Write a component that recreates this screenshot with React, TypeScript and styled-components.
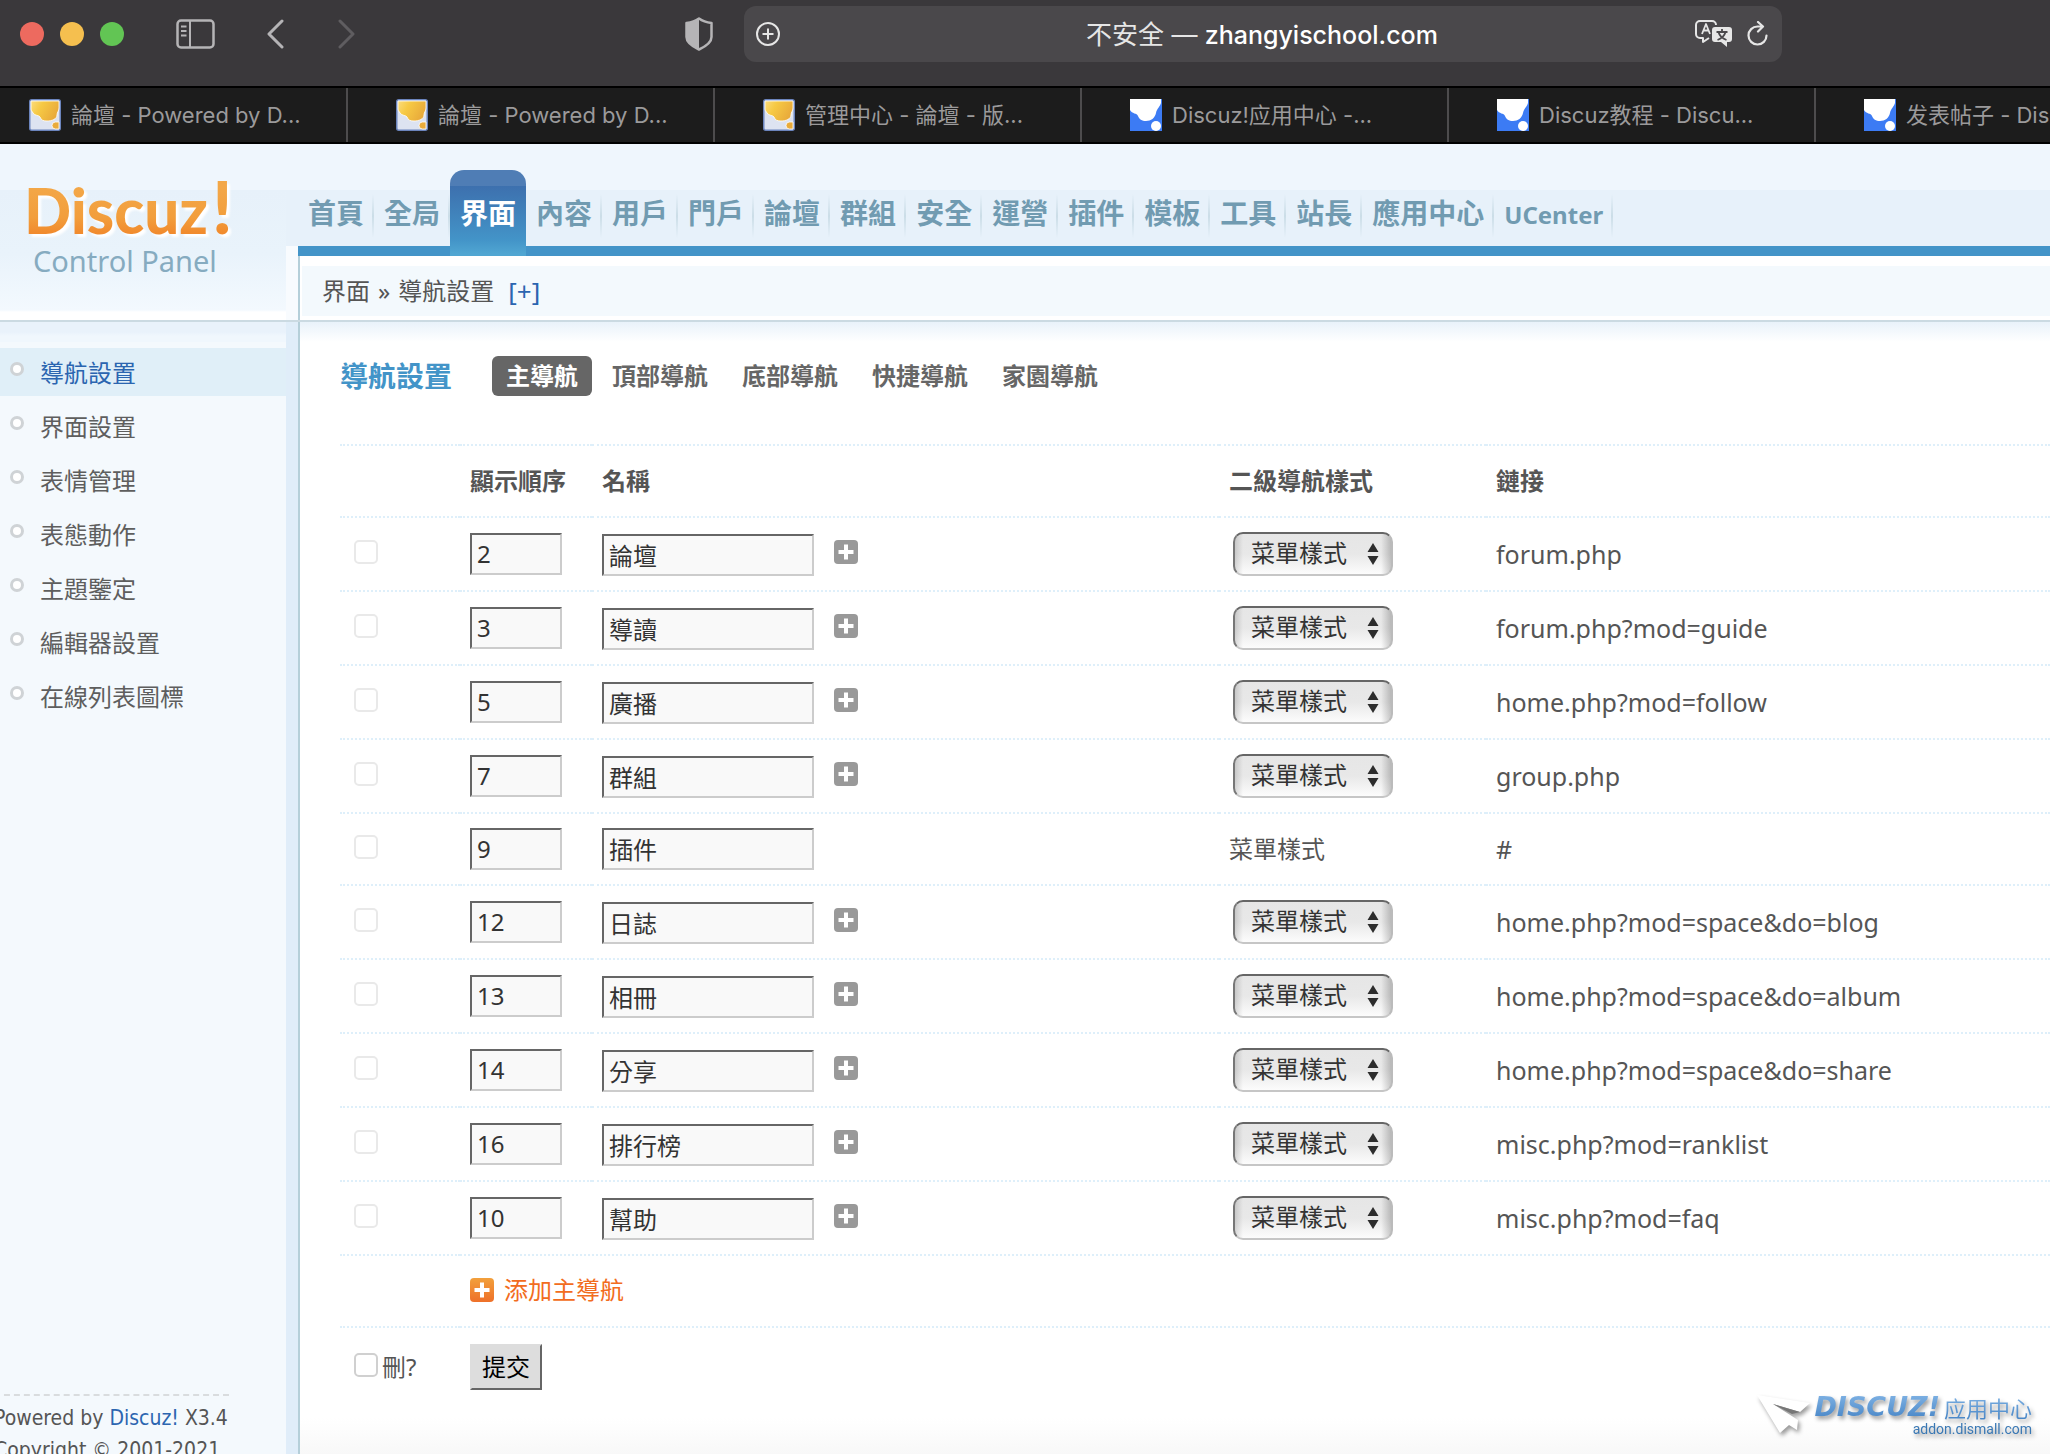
import React from "react";
import styled, { createGlobalStyle, css } from "styled-components";

const sans = `"Noto Sans", "Noto Sans CJK TC", sans-serif`;
const chromeSans = `Inter, "Noto Sans CJK SC", sans-serif`;
const textGrey = "#555";
const linkBlue = "#2b65b0";
const barBlue = "#4394c8";
const edge = "#b5cfd9";

const GlobalStyle = createGlobalStyle`
  * { box-sizing: border-box; }
  body { margin: 0; overflow: hidden; background: #fff; }
  button, input, select { font: inherit; margin: 0; }
  a { color: inherit; text-decoration: none; }
`;

const Shell = styled.div`
  display: flex;
  flex-direction: column;
  height: 100vh;
  overflow: hidden;
  font: 24px/32px ${sans};
  color: ${textGrey};
`;

/* Browser window */
const Toolbar = styled.header`
  display: flex;
  flex: none;
  align-items: flex-start;
  height: 88px;
  padding: 6px 268px 0 0;
  background: #3a383b;
  border-bottom: 2px solid #000;
`;

const ToolbarStart = styled.div`
  display: flex;
  flex: none;
  align-items: center;
  width: 744px;
  height: 56px;
  padding: 0 31px 0 20px;
`;

const Lights = styled.div`
  display: flex;
  gap: 16px;
  margin-right: 52px;
`;

const Light = styled.button<{ $color: string }>`
  width: 24px;
  height: 24px;
  padding: 0;
  border: 0;
  border-radius: 50%;
  background: ${(p) => p.$color};
`;

const IconButton = styled.button<{ $color?: string }>`
  display: flex;
  flex: none;
  padding: 0;
  border: 0;
  background: none;
  color: ${(p) => p.$color ?? "#b5b4b6"};
`;

const Arrows = styled.div`
  display: flex;
  gap: 54px;
  margin: 0 auto 0 52px;
`;

const AddressBar = styled.div`
  display: grid;
  grid-template-columns: 1fr auto 1fr;
  align-items: center;
  flex: 1;
  height: 56px;
  padding: 0 14px 0 12px;
  border-radius: 12px;
  background: #4a484b;
  color: #fff;
  font: 500 25px/32px ${chromeSans};
`;

const AddressText = styled.span`
  padding-top: 2px;
`;

const Insecure = styled.span`
  font-size: 26px;
  font-weight: 400;
  color: #e6e6e6;
`;

const AddressTools = styled.div`
  display: flex;
  justify-content: flex-end;
  align-items: center;
  gap: 14px;
`;

const TabStrip = styled.nav`
  display: flex;
  flex: none;
  height: 56px;
  margin-left: -19px;
  background: #1c1c1c;
  border-bottom: 2px solid #000;
`;

const BrowserTab = styled.a`
  display: flex;
  flex: none;
  align-items: center;
  gap: 10px;
  width: 367px;
  padding-left: 48px;
  border-right: 2px solid #4d4c4d;
  color: #9b9a9b;
  font: 22px/32px ${chromeSans};
  white-space: nowrap;
`;

/* Control panel header */
const PanelHeader = styled.header`
  display: flex;
  flex: none;
  height: 178px;
  border-bottom: 2px solid #cbdae2;
`;

const Logo = styled.a`
  display: block;
  width: 286px;
  padding: 28px 0 0 24px;
  background: linear-gradient(#eff6fd 46px, #e7f1fa 46px, #e9f3fb 110px, #f3f9fe 166px, #fff 168px);
`;

const LogoName = styled.span`
  display: block;
  font: 900 62px/76px Lato, sans-serif;
  background: linear-gradient(#f3a748 20%, #f29e3c 60%, #f18b2e 80%);
  background-clip: text;
  color: transparent;
  filter: drop-shadow(3px 3px 1px #fff);
`;

const LogoBang = styled.span`
  margin-left: 4px;
  font-size: 72px;
  line-height: 0;
`;

const LogoSub = styled.span`
  display: block;
  padding-left: 9px;
  font-size: 29px;
  line-height: 26px;
  color: #86abc0;
`;

const HeaderGutter = styled.div`
  width: 12px;
  background: linear-gradient(#eff6fd 46px, #e7f1fa 46px, #e7f1fa 102px, #f8fbfe 102px);
`;

const HeaderMain = styled.div`
  display: flex;
  flex-direction: column;
  flex: 1;
`;

const TopNav = styled.nav`
  display: flex;
  height: 112px;
  padding-top: 26px;
  background: linear-gradient(#eff6fd 46px, #e7f1fa 46px, #e7f1fa 102px, ${barBlue} 102px);
`;

const TopLink = styled.a<{ $active?: boolean }>`
  padding: 0 10px;
  font-size: 28px;
  font-weight: 700;
  line-height: 86px;
  color: #719bb1;
  background: linear-gradient(transparent, #cbdde7 50%, transparent) right 24px / 2px 44px no-repeat;
  ${(p) =>
    p.$active &&
    css`
      color: #fff;
      border-radius: 14px 14px 0 0;
      background: linear-gradient(#4f7db5 16px, #3d70ae 16px, ${barBlue} 70px, #50a6d2 84px);
    `}
`;

const LatinLabel = styled.span`
  font-size: 24px;
`;

const CrumbFrame = styled.div`
  flex: 1;
  padding: 10px 0 4px 2px;
  border-left: 2px solid ${edge};
  background: #fff;
`;

const Crumb = styled.div`
  display: flex;
  align-items: center;
  gap: 8px;
  height: 50px;
  padding-left: 20px;
  background: #f3f9fd;
`;

const CrumbAdd = styled.a`
  padding-left: 6px;
  font-size: 26px;
  color: ${linkBlue};
`;

/* Body */
const Body = styled.div`
  display: flex;
  flex: 1;
  min-height: 0;
`;

const Sidebar = styled.aside`
  display: flex;
  flex-direction: column;
  width: 300px;
  border-right: 2px solid ${edge};
  background: linear-gradient(to right, transparent 286px, #e0edf9 286px),
    linear-gradient(#e9f2fb 10px, #f0f7fd 14px, #f0f7fd 20px, #f4f9fd 20px);
`;

const SideList = styled.ul`
  display: flex;
  flex-direction: column;
  gap: 6px;
  margin: 0;
  padding: 26px 12px 0 0;
  list-style: none;
`;

const SideLink = styled.a<{ $active?: boolean }>`
  display: flex;
  align-items: center;
  gap: 16px;
  height: 48px;
  padding: 2px 0 0 10px;
  color: ${(p) => (p.$active ? linkBlue : "#5e5e5e")};
  background: ${(p) => (p.$active ? "#e0eff8" : "transparent")};
`;

const Bullet = styled.span`
  width: 14px;
  height: 14px;
  margin-bottom: 8px;
  border: 3px solid #cfd3d6;
  border-radius: 50%;
  background: #fff;
`;

const SideFooter = styled.footer`
  width: 235px;
  margin: auto 0 -12px -6px;
  padding-top: 6px;
  border-top: 2px dashed #d9dcde;
  font: 21px/32px "DejaVu Sans Condensed", "DejaVu Sans", sans-serif;
  font-stretch: condensed;
  white-space: nowrap;

  p { margin: 0; }
  a { color: ${linkBlue}; }
`;

const Content = styled.main`
  flex: 1;
  min-width: 0;
  padding: 34px 0 0 40px;
  background: linear-gradient(#e9f2fa, #fff 20px, #fff calc(100% - 36px), #f8f8f8);
`;

const TitleRow = styled.div`
  display: flex;
  align-items: center;
  gap: 40px;
  height: 40px;
  margin-bottom: 48px;
`;

const Title = styled.h1`
  margin: 0;
  font-size: 28px;
  line-height: 40px;
  color: ${barBlue};
`;

const SubTabs = styled.nav`
  display: flex;
  gap: 6px;
`;

const SubTab = styled.a<{ $active?: boolean }>`
  padding: 0 14px;
  border-radius: 6px;
  font-weight: 700;
  line-height: 40px;
  color: ${(p) => (p.$active ? "#fff" : "#666")};
  background: ${(p) => (p.$active ? "#666" : "transparent")};
`;

const Table = styled.table`
  width: 100%;
  table-layout: fixed;
  border-collapse: separate;
  border-spacing: 0;
`;

const Col = styled.col<{ $width?: number }>`
  width: ${(p) => (p.$width ? `${p.$width}px` : "auto")};
`;

const cell = css`
  padding: 14px 0 14px 10px;
  border-top: 2px dotted #deeffa;
  text-align: left;
  vertical-align: middle;
`;

const Th = styled.th`
  ${cell}
  height: 72px;
`;

const Td = styled.td`
  ${cell}
  height: 72px;
`;

const LinkTd = styled(Td)`
  font-size: 25px;
`;

const FootTd = styled(Td)`
  padding-top: 16px;
`;

const Check = styled.input<{ $strong?: boolean }>`
  appearance: none;
  display: block;
  width: 24px;
  height: 24px;
  margin: 0 0 4px 4px;
  border: 2px solid ${(p) => (p.$strong ? "#d0d0d0" : "#e9e9e9")};
  border-radius: 5px;
  background: #fff;
`;

const CheckLabel = styled.label`
  display: flex;
  align-items: center;
  gap: 4px;
`;

const Field = styled.input<{ $width: number }>`
  display: block;
  width: ${(p) => p.$width}px;
  height: 42px;
  padding: 0 5px 2px;
  border: 2px solid;
  border-color: #666 #ccc #ccc #666;
  background: #f9f9f9;
  color: #333;
`;

const NameLine = styled.div<{ $nested: boolean }>`
  display: flex;
  align-items: flex-start;
  gap: 20px;
  padding-top: ${(p) => (p.$nested ? 2 : 0)}px;
`;

const PlusButton = styled(IconButton)`
  padding-top: 6px;
`;

const SelectBox = styled.div`
  position: relative;
  width: 160px;
  height: 44px;
  margin-left: 4px;

  svg {
    position: absolute;
    right: 14px;
    top: 10px;
    pointer-events: none;
  }
`;

const Select = styled.select`
  appearance: none;
  display: block;
  width: 100%;
  height: 100%;
  padding: 0 0 2px 16px;
  border: 2px solid;
  border-color: #666 #bbb #c6c6c6 #777;
  border-radius: 10px;
  background: linear-gradient(to right, #0002, transparent 8px, transparent calc(100% - 10px), #0003),
    linear-gradient(#e6e6e6, #e8e8e8 50%, #fcfcfc);
  color: #333;
`;

const AddLink = styled.a`
  display: inline-flex;
  align-items: center;
  gap: 10px;
  color: #f26c20;
`;

const Submit = styled.button`
  display: block;
  width: 72px;
  height: 46px;
  padding: 0;
  border: 2px solid;
  border-color: #ddd #666 #666 #ddd;
  background: #ddd;
  color: #000;
`;

const Watermark = styled.a`
  position: fixed;
  right: 18px;
  bottom: 16px;
  display: flex;
  align-items: flex-start;
  gap: 3px;
  filter: drop-shadow(2px 3px 2px #0006);
`;

const MarkText = styled.span`
  display: flex;
  flex-direction: column;
  align-items: flex-end;
`;

const MarkTop = styled.span`
  display: flex;
  align-items: center;
  gap: 4px;
  font: 22px/26px "Noto Sans CJK SC", sans-serif;
  background: linear-gradient(#7fb2e4, #4785c6);
  background-clip: text;
  color: transparent;
`;

const MarkName = styled.em`
  font: italic 700 27px/26px "DejaVu Sans", sans-serif;
`;

const MarkUrl = styled.span`
  font: 14px/18px Roboto, sans-serif;
  color: #3a78b4;
`;

const SidebarIcon = () => (
  <svg width="39" height="30" viewBox="0 0 39 30" fill="none" stroke="currentColor" strokeWidth="2.5">
    <rect x="1.5" y="1.5" width="36" height="27" rx="3.5" />
    <path d="M14 1.5v27M5 7.500h5.500M5 12h5.500M5 16.500h5.500" strokeWidth="2" />
  </svg>
);

const Chevron = ({ right }: { right?: boolean }) => (
  <svg width="17" height="30" viewBox="0 0 17 30" fill="none" stroke="currentColor" strokeWidth="3" strokeLinecap="round" strokeLinejoin="round">
    <path d={right ? "M2 2l13 13L2 28" : "M15 2L2 15l13 13"} />
  </svg>
);

const Shield = () => (
  <svg width="28" height="34" viewBox="0 0 28 34">
    <path d="M14 1.500C10 4.500 6 5.500 1.500 6v14c0 5 6 9.500 12.500 12.500C20.500 29.500 26.500 25 26.500 20V6C22 5.500 18 4.500 14 1.500z" fill="none" stroke="currentColor" strokeWidth="2.5" strokeLinejoin="round" />
    <path d="M14 1.500C10 4.500 6 5.500 1.500 6v14c0 5 6 9.500 12.500 12.500z" fill="currentColor" />
  </svg>
);

const CirclePlus = () => (
  <svg width="24" height="24" viewBox="0 0 24 24" fill="none" stroke="currentColor" strokeWidth="2">
    <circle cx="12" cy="12" r="11" />
    <path d="M12 6.500v11M6.500 12h11" />
  </svg>
);

const Translate = () => (
  <svg width="38" height="28" viewBox="0 0 38 28" fill="none" stroke="currentColor" strokeWidth="2" strokeLinejoin="round">
    <path d="M14 18l-6 4v-4H5a4 4 0 0 1-4-4V5a4 4 0 0 1 4-4h12a4 4 0 0 1 4 4" />
    <path d="M7 14l4-10 4 10M8.500 10.500h5" strokeWidth="1.8" />
    <path d="M20 7h14a3 3 0 0 1 3 3v9a3 3 0 0 1-3 3h-2v5l-6-5h-6a3 3 0 0 1-3-3v-9a3 3 0 0 1 3-3z" fill="currentColor" stroke="none" />
    <path d="M27 9v3M21.500 12h11M23.500 12c1 4 4 6.500 8 8M30.500 12c-1 4-4 6.500-8 8" stroke="#4a484b" strokeWidth="1.8" />
  </svg>
);

const Reload = () => (
  <svg width="21" height="26" viewBox="0 0 21 26" fill="none" stroke="currentColor" strokeWidth="2.2" strokeLinecap="round" strokeLinejoin="round">
    <path d="M19.500 14.500a9 9 0 1 1-9-9h5M11 1l5 4.500-5 5" />
  </svg>
);

const ForumIcon = () => (
  <svg width="32" height="32" viewBox="0 0 32 32">
    <defs>
      <linearGradient id="gold" x1="0" y1="0" x2="1" y2="0.4">
        <stop offset="0" stopColor="#fbdc7c" />
        <stop offset="0.4" stopColor="#f6c944" />
        <stop offset="1" stopColor="#e9ab3b" />
      </linearGradient>
    </defs>
    <rect x="0.750" y="0.750" width="30.500" height="30.500" rx="2" fill="#dde3f1" stroke="#6b84bd" strokeWidth="1.5" />
    <path d="M2 2h28v7c0 3-2 4-2 7 0 4-5 6-10 6-4 0-6-1-7-4-1-2-5-1-7-4-1-2-2-2-2-4z" fill="url(#gold)" stroke="#fff" strokeWidth="0.8" />
    <path d="M30 23v7h-3.500a3.500 3.500 0 0 1 0-7z" fill="#e9ab3b" stroke="#fff" strokeWidth="0.8" />
  </svg>
);

const AddonIcon = () => (
  <svg width="32" height="32" viewBox="0 0 32 32">
    <path d="M0 0h32v32H0z" fill="#3c7bf4" />
    <path d="M0 0h31v4c-1 4-4 5-5 10-1 5-5 8-10 8-4 0-7-2-8-5-1-3-6-2-8-6z" fill="#fff" />
    <circle cx="26" cy="27" r="5" fill="#fff" />
  </svg>
);

const PlusTile = ({ accent }: { accent?: boolean }) => (
  <svg width="24" height="24" viewBox="0 0 24 24">
    <defs>
      <linearGradient id="accentTile" x1="0" y1="0" x2="0" y2="1">
        <stop offset="0" stopColor="#f2a03c" />
        <stop offset="1" stopColor="#ee7029" />
      </linearGradient>
    </defs>
    <rect width="24" height="24" rx="4" fill={accent ? "url(#accentTile)" : "#999"} />
    <path d="M12 4.500v15M4.500 12h15" stroke="#fff" strokeWidth="4" />
  </svg>
);

const SelectArrows = () => (
  <svg width="12" height="24" viewBox="0 0 12 24" fill="#2c2c2c">
    <path d="M6 1l5.500 9H.5zM6 23l5.500-9H.5z" />
  </svg>
);

const PaperPlane = () => (
  <svg width="54" height="40" viewBox="0 0 54 40" fill="#fff">
    <path d="M0 1l53 8-10 9-27-8 25 16-1 10-8-5-9 8z" />
    <path d="M16 10l27 8-8 2z" fill="#777" />
  </svg>
);

const browserTabs = [
  { icon: "forum", label: "論壇 - Powered by D..." },
  { icon: "forum", label: "論壇 - Powered by D..." },
  { icon: "forum", label: "管理中心 - 論壇 - 版..." },
  { icon: "addon", label: "Discuz!应用中心 -..." },
  { icon: "addon", label: "Discuz教程 - Discu..." },
  { icon: "addon", label: "发表帖子 - Discuz!" },
];

const topNav = ["首頁", "全局", "界面", "內容", "用戶", "門戶", "論壇", "群組", "安全", "運營", "插件", "模板", "工具", "站長", "應用中心"];
const sideNav = ["導航設置", "界面設置", "表情管理", "表態動作", "主題鑒定", "編輯器設置", "在線列表圖標"];
const subTabs = ["主導航", "頂部導航", "底部導航", "快捷導航", "家園導航"];

const rows = [
  { order: "2", name: "論壇", link: "forum.php" },
  { order: "3", name: "導讀", link: "forum.php?mod=guide" },
  { order: "5", name: "廣播", link: "home.php?mod=follow" },
  { order: "7", name: "群組", link: "group.php" },
  { order: "9", name: "插件", link: "#", fixed: true },
  { order: "12", name: "日誌", link: "home.php?mod=space&do=blog" },
  { order: "13", name: "相冊", link: "home.php?mod=space&do=album" },
  { order: "14", name: "分享", link: "home.php?mod=space&do=share" },
  { order: "16", name: "排行榜", link: "misc.php?mod=ranklist" },
  { order: "10", name: "幫助", link: "misc.php?mod=faq" },
];

export default function App() {
  return (
    <Shell>
      <GlobalStyle />
      <Toolbar>
        <ToolbarStart>
          <Lights>
            <Light $color="#ed6a5f" aria-label="Close" />
            <Light $color="#f5bf4f" aria-label="Minimize" />
            <Light $color="#62c554" aria-label="Zoom" />
          </Lights>
          <IconButton aria-label="Sidebar"><SidebarIcon /></IconButton>
          <Arrows>
            <IconButton aria-label="Back"><Chevron /></IconButton>
            <IconButton aria-label="Forward" $color="#5f5d60"><Chevron right /></IconButton>
          </Arrows>
          <IconButton aria-label="Privacy report"><Shield /></IconButton>
        </ToolbarStart>
        <AddressBar>
          <IconButton aria-label="Add" $color="#e6e6e6"><CirclePlus /></IconButton>
          <AddressText><Insecure>不安全 — </Insecure>zhangyischool.com</AddressText>
          <AddressTools>
            <IconButton aria-label="Translate" $color="#e6e6e6"><Translate /></IconButton>
            <IconButton aria-label="Reload" $color="#e6e6e6"><Reload /></IconButton>
          </AddressTools>
        </AddressBar>
      </Toolbar>
      <TabStrip>
        {browserTabs.map((t, i) => (
          <BrowserTab key={i} href="#">
            {t.icon === "forum" ? <ForumIcon /> : <AddonIcon />}
            <span>{t.label}</span>
          </BrowserTab>
        ))}
      </TabStrip>

      <PanelHeader>
        <Logo href="#">
          <LogoName>Discuz<LogoBang>!</LogoBang></LogoName>
          <LogoSub>Control Panel</LogoSub>
        </Logo>
        <HeaderGutter />
        <HeaderMain>
          <TopNav>
            {topNav.map((n) => (
              <TopLink key={n} href="#" $active={n === "界面"}>{n}</TopLink>
            ))}
            <TopLink href="#"><LatinLabel>UCenter</LatinLabel></TopLink>
          </TopNav>
          <CrumbFrame>
            <Crumb>
              <span>界面</span>
              <span>»</span>
              <span>導航設置</span>
              <CrumbAdd href="#">[+]</CrumbAdd>
            </Crumb>
          </CrumbFrame>
        </HeaderMain>
      </PanelHeader>

      <Body>
        <Sidebar>
          <SideList>
            {sideNav.map((s, i) => (
              <li key={s}>
                <SideLink href="#" $active={i === 0}><Bullet />{s}</SideLink>
              </li>
            ))}
          </SideList>
          <SideFooter>
            <p>Powered by <a href="#">Discuz!</a> X3.4</p>
            <p>Copyright © 2001-2021</p>
          </SideFooter>
        </Sidebar>

        <Content>
          <TitleRow>
            <Title>導航設置</Title>
            <SubTabs>
              {subTabs.map((s, i) => (
                <SubTab key={s} href="#" $active={i === 0}>{s}</SubTab>
              ))}
            </SubTabs>
          </TitleRow>
          <Table>
            <colgroup>
              <Col $width={120} />
              <Col $width={132} />
              <Col $width={627} />
              <Col $width={267} />
              <Col />
            </colgroup>
            <thead>
              <tr>
                <Th />
                <Th>顯示順序</Th>
                <Th>名稱</Th>
                <Th>二級導航樣式</Th>
                <Th>鏈接</Th>
              </tr>
            </thead>
            <tbody>
              {rows.map((r) => (
                <tr key={r.order}>
                  <Td><Check type="checkbox" disabled aria-label={`刪 ${r.name}`} /></Td>
                  <Td><Field $width={92} defaultValue={r.order} aria-label="顯示順序" /></Td>
                  <Td>
                    <NameLine $nested={!r.fixed}>
                      <Field $width={212} defaultValue={r.name} aria-label="名稱" />
                      {!r.fixed && <PlusButton aria-label="+"><PlusTile /></PlusButton>}
                    </NameLine>
                  </Td>
                  <Td>
                    {r.fixed ? "菜單樣式" : (
                      <SelectBox>
                        <Select aria-label="二級導航樣式"><option>菜單樣式</option></Select>
                        <SelectArrows />
                      </SelectBox>
                    )}
                  </Td>
                  <LinkTd>{r.link}</LinkTd>
                </tr>
              ))}
              <tr>
                <Td />
                <Td colSpan={4}><AddLink href="#"><PlusTile accent />添加主導航</AddLink></Td>
              </tr>
              <tr>
                <FootTd>
                  <CheckLabel><Check type="checkbox" $strong />刪?</CheckLabel>
                </FootTd>
                <FootTd colSpan={4}><Submit>提交</Submit></FootTd>
              </tr>
            </tbody>
          </Table>
        </Content>
      </Body>

      <Watermark href="#">
        <PaperPlane />
        <MarkText>
          <MarkTop><MarkName>DISCUZ!</MarkName>应用中心</MarkTop>
          <MarkUrl>addon.dismall.com</MarkUrl>
        </MarkText>
      </Watermark>
    </Shell>
  );
}
